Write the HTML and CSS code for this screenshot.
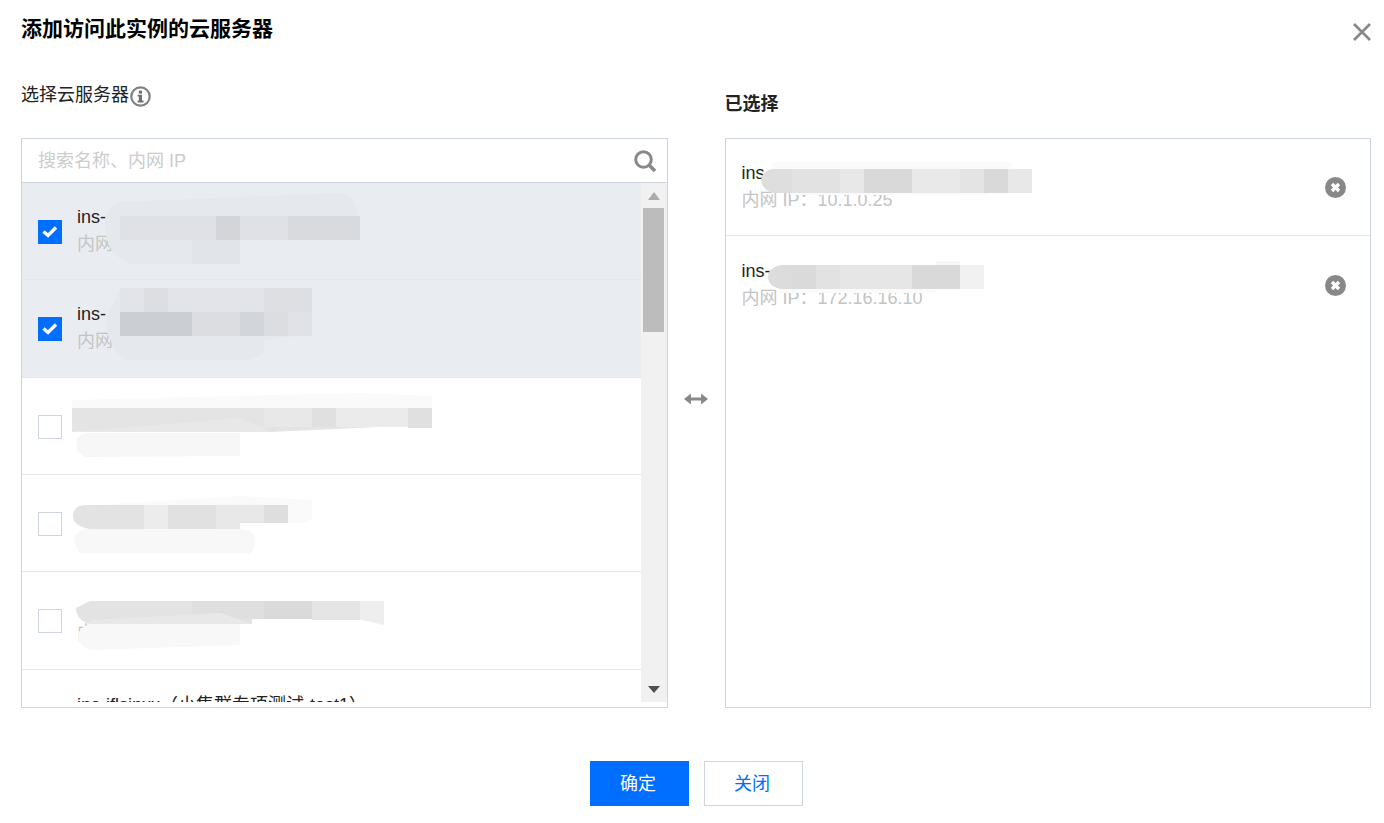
FILE: index.html
```html
<!DOCTYPE html>
<html lang="zh-CN">
<head>
    <meta charset="UTF-8">
    <title>添加访问此实例的云服务器</title>
    <link rel="stylesheet" href="styles.css">
</head>
<body>
    <div class="dialog">
        <div class="dialog-head">
            <h3 class="dialog-title">添加访问此实例的云服务器</h3>
            <svg class="close-icon" width="20" height="20" viewBox="0 0 20 20"><path d="M2 2l16 16M18 2L2 18" stroke="#888" stroke-width="2.6" fill="none"/></svg>
        </div>

        <div class="transfer">
            <div class="pane">
                <div class="pane-label">
                    选择云服务器<svg class="info-icon" width="21" height="21" viewBox="0 0 21 21"><circle cx="10.5" cy="10.5" r="9.200" fill="none" stroke="#808080" stroke-width="2.200"/><rect x="8.800" y="4.600" width="3.200" height="3" fill="#707070"/><path d="M7.600 8.800h4.400v5.800h1.500v1.800H7.600v-1.800h1.300v-4H7.600z" fill="#707070"/></svg>
                </div>
                <div class="box">
                    <div class="search">
                        <span class="search-text">搜索名称、内网 IP</span>
                        <svg class="search-icon" width="24" height="24" viewBox="0 0 24 24"><circle cx="10.5" cy="10.5" r="7.8" fill="none" stroke="#888" stroke-width="3"/><path d="M16 16l6 6" stroke="#888" stroke-width="3.6"/></svg>
                    </div>
                    <div class="list-wrap">
                        <ul class="list">
                            <li class="item selected">
                                <span class="check"><svg width="24" height="24" viewBox="0 0 24 24"><path d="M5.500 11.500l4.500 4L18 7.500" stroke="#fff" stroke-width="3.400" fill="none"/></svg></span>
                                <div class="item-text"><div class="item-name">ins-</div><div class="item-ip">内网</div></div>
                            </li>
                            <li class="item selected">
                                <span class="check"><svg width="24" height="24" viewBox="0 0 24 24"><path d="M5.500 11.500l4.500 4L18 7.500" stroke="#fff" stroke-width="3.400" fill="none"/></svg></span>
                                <div class="item-text"><div class="item-name">ins-</div><div class="item-ip">内网</div></div>
                            </li>
                            <li class="item">
                                <span class="check"></span>
                            </li>
                            <li class="item">
                                <span class="check"></span>
                            </li>
                            <li class="item">
                                <span class="check"></span>
                                <div class="item-text"><div class="item-name">&nbsp;</div><div class="item-ip">内</div></div>
                            </li>
                            <li class="item item-cut">
                                <span class="check"></span>
                                <div class="item-text"><div class="item-name">ins-iflsjnxx（小集群专项测试-test1）</div></div>
                            </li>
                        </ul>
                        <div class="scrollbar">
                            <span class="arrow-up"></span>
                            <div class="thumb"></div>
                            <span class="arrow-down"></span>
                        </div>
                    </div>
                </div>
            </div>

            <div class="swap">
                <svg width="24" height="12" viewBox="0 0 24 12"><path d="M0 6l7-5.500v4h10v-4l7 5.500-7 5.500v-4H7v4z" fill="#888"/></svg>
            </div>

            <div class="pane">
                <div class="pane-label pane-label-bold">已选择</div>
                <div class="box">
                    <ul class="picked">
                        <li class="picked-item">
                            <div class="item-text"><div class="item-name">ins-</div><div class="item-ip">内网 IP：10.1.0.25</div></div>
                            <svg class="remove-icon" width="21" height="21" viewBox="0 0 21 21"><circle cx="10.500" cy="10.500" r="10.500" fill="#888"/><path d="M7 7l7 7M14 7l-7 7" stroke="#fff" stroke-width="3.400"/></svg>
                        </li>
                        <li class="picked-item">
                            <div class="item-text"><div class="item-name">ins-</div><div class="item-ip">内网 IP：172.16.16.10</div></div>
                            <svg class="remove-icon" width="21" height="21" viewBox="0 0 21 21"><circle cx="10.500" cy="10.500" r="10.500" fill="#888"/><path d="M7 7l7 7M14 7l-7 7" stroke="#fff" stroke-width="3.400"/></svg>
                        </li>
                    </ul>
                </div>
            </div>
        </div>

        <div class="dialog-foot">
            <button class="btn btn-primary">确定</button>
            <button class="btn">关闭</button>
        </div>
    </div>

    <!-- mosaic that hides instance names, in page coordinates -->
    <svg class="mosaic" width="1384" height="823" viewBox="0 0 1384 823">
        <!-- row 1 -->
        <path d="M118 202L340 193q16 2 18 23v24H240v24H130q-25-10-25-40q0-16 13-22z" fill="#e5e8ed"/>
        <rect x="120" y="216" width="240" height="24" fill="#dfe1e6"/>
        <rect x="216" y="216" width="24" height="24" fill="#d3d5d9"/>
        <rect x="288" y="216" width="72" height="24" fill="#d8dade"/>
        <rect x="192" y="240" width="48" height="24" fill="#e1e4e8"/>
        <!-- row 2 -->
        <path d="M120 290H312V336H296L264 340V350Q260 360 240 360H125Q110 350 105 320z" fill="#e5e8ed"/>
        <rect x="120" y="288" width="192" height="24" fill="#e2e4e9"/>
        <rect x="144" y="288" width="24" height="24" fill="#dcdee2"/>
        <rect x="264" y="288" width="48" height="24" fill="#dddfe3"/>
        <rect x="120" y="312" width="192" height="24" fill="#dbdde1"/>
        <rect x="120" y="312" width="72" height="24" fill="#cbced3"/>
        <rect x="240" y="312" width="24" height="24" fill="#d2d5d9"/>
        <rect x="288" y="312" width="24" height="24" fill="#e0e2e7"/>
        <!-- row 3 -->
        <path d="M72 400L360 393L432 396V408H72z" fill="#fafafa"/>
        <path d="M72 408H432V428L400 426L270 432L240 420L72 432z" fill="#e4e4e4"/>
        <rect x="264" y="408" width="48" height="19" fill="#e8e8e8"/>
        <rect x="312" y="408" width="24" height="19" fill="#e0e0e0"/>
        <rect x="336" y="408" width="72" height="19" fill="#ebebeb"/>
        <rect x="408" y="408" width="24" height="20" fill="#e0e0e0"/>
        <path d="M72 432L240 418L272 432H72z" fill="#e8e8e8"/>
        <path d="M85 433H240V456L85 457Q76 452 76 445Q76 436 85 433z" fill="#f7f7f7"/>
        <!-- row 4 -->
        <path d="M80 506L240 496L312 500V515Q312 523 300 523H90Q73 522 73 515Q72 508 80 506z" fill="#fafafa"/>
        <path d="M85 505H288V523H240V529H90Q73 526 73 516Q73 506 85 505z" fill="#e3e3e3"/>
        <rect x="144" y="505" width="24" height="24" fill="#ececec"/>
        <rect x="168" y="505" width="48" height="24" fill="#e1e1e1"/>
        <rect x="216" y="505" width="24" height="24" fill="#e8e8e8"/>
        <rect x="240" y="505" width="24" height="18" fill="#e8e8e8"/>
        <rect x="264" y="505" width="24" height="18" fill="#dedede"/>
        <path d="M85 529H240Q255 530 255 541Q255 550 250 553H80Q74 545 74 540Q74 531 85 529z" fill="#f8f8f8"/>
        <!-- row 5 -->
        <path d="M90 601H360V619H340L252 613V624H90Q76 620 76 608z" fill="#e3e3e3"/>
        <rect x="192" y="601" width="120" height="18" fill="#dfdfdf"/>
        <rect x="264" y="601" width="48" height="18" fill="#dadada"/>
        <path d="M360 601H384V625L362 620H360z" fill="#eeeeee"/>
        <path d="M312 601H360V620H312z" fill="#e5e5e5"/>
        <path d="M90 620L220 613L252 624H90z" fill="#e8e8e8"/>
        <path d="M90 624H240V645L90 650Q78 645 78 636Q79 627 90 624z" fill="#f8f8f8"/>
        <!-- right row 1 -->
        <rect x="772" y="162" width="240" height="8" fill="#fbfbfb"/>
        <path d="M772 169H792V193H772Q761 188 761 180Q761 172 772 169z" fill="#dedede"/>
        <rect x="792" y="169" width="48" height="24" fill="#e2e2e2"/>
        <rect x="840" y="169" width="24" height="24" fill="#e8e8e8"/>
        <rect x="864" y="169" width="48" height="24" fill="#d9d9d9"/>
        <rect x="912" y="169" width="48" height="24" fill="#e9e9e9"/>
        <rect x="960" y="169" width="24" height="24" fill="#e4e4e4"/>
        <rect x="984" y="169" width="24" height="24" fill="#d9d9d9"/>
        <rect x="1008" y="169" width="24" height="24" fill="#e8e8e8"/>
        <rect x="790" y="193" width="200" height="2" fill="#fafafa"/>
        <!-- right row 2 -->
        <rect x="936" y="261" width="24" height="4" fill="#f6f6f6"/>
        <path d="M780 265H792V289H780Q768 286 768 277Q768 268 780 265z" fill="#dcdcdc"/>
        <rect x="792" y="265" width="24" height="24" fill="#dadada"/>
        <rect x="816" y="265" width="24" height="24" fill="#e2e2e2"/>
        <rect x="840" y="265" width="72" height="24" fill="#e6e6e6"/>
        <rect x="912" y="265" width="48" height="24" fill="#d9d9d9"/>
        <rect x="960" y="265" width="24" height="24" fill="#f1f1f1"/>
        <rect x="780" y="289" width="156" height="4" fill="#fafafa"/>
    </svg>
</body>
</html>
```

FILE: styles.css
```css
* {
    box-sizing: border-box;
}
body {
    margin: 0;
    background-color: #fff;
    color: #222;
    font-family: "Liberation Sans", "Noto Sans CJK SC", sans-serif;
    font-size: 18px;
}
ul {
    list-style: none;
    margin: 0;
    padding: 0;
}
.dialog {
    width: 1384px;
    padding: 0 13px 0 21px;
}
.dialog-head {
    display: flex;
    justify-content: space-between;
    align-items: center;
    height: 58px;
}
.dialog-title {
    margin: 0 0 4px 0;
    font-size: 21px;
    font-weight: bold;
    color: #000;
}
.close-icon {
    margin: 5px -1px 0 0;
}
.transfer {
    display: flex;
}
.pane {
    width: 646px;
}
.pane:first-child {
    width: 647px;
}
.pane-label {
    display: flex;
    align-items: center;
    height: 80px;
    padding: 25px 0 31px;
    line-height: 26px;
}
.pane-label-bold {
    padding: 34px 0 22px;
    margin-left: -1px;
    font-weight: bold;
}
.info-icon {
    margin: 3px 0 0 1px;
}
.box {
    display: flex;
    flex-direction: column;
    height: 570px;
    border: 1px solid #cfd5de;
}
.search {
    display: flex;
    justify-content: space-between;
    align-items: center;
    flex: none;
    height: 44px;
    padding: 0 10px 0 16px;
    border-bottom: 1px solid #cfd5de;
}
.search-text {
    margin-bottom: 4px;
    color: #ccc;
}
.search-icon {
    margin-top: 1px;
}
.list-wrap {
    display: flex;
    flex: 1;
    min-height: 0;
    margin-bottom: 5px;
}
.list {
    flex: 1;
    overflow: hidden;
}
.item {
    display: flex;
    align-items: center;
    height: 97.33px;
    padding-left: 16px;
    border-bottom: 1px solid #e3e6eb;
}
.item-cut {
    align-items: flex-start;
    padding-top: 22px;
}
.item-cut .check {
    margin-top: 23px;
}
.item.selected {
    background-color: #e9edf2;
}
.check {
    flex: none;
    width: 24px;
    height: 24px;
    margin: 2px 15px 0 0;
    border: 1px solid #cfd5de;
    background-color: #fff;
}
.selected .check {
    border: none;
    background-color: #006eff;
}
.check svg {
    display: block;
}
.item-text {
    margin-bottom: 1px;
    line-height: 27px;
}
.item-name {
    white-space: nowrap;
}
.item-ip {
    color: #c4c4c4;
}
.scrollbar {
    display: flex;
    flex-direction: column;
    align-items: center;
    flex: none;
    width: 26px;
    background-color: #f1f1f1;
}
.arrow-up, .arrow-down {
    flex: none;
    width: 0;
    height: 0;
    border-left: 6px solid transparent;
    border-right: 6px solid transparent;
}
.arrow-up {
    margin: 9px 0 8px;
    border-bottom: 8px solid #aaa;
}
.arrow-down {
    margin: auto 0 9px;
    border-top: 7px solid #505050;
}
.thumb {
    align-self: flex-start;
    width: 21px;
    height: 124px;
    margin-left: 2px;
    background-color: #bcbcbc;
}
.swap {
    display: flex;
    justify-content: center;
    align-items: center;
    width: 58px;
    padding-top: 32px;
}
.picked-item {
    display: flex;
    justify-content: space-between;
    align-items: center;
    height: 97.33px;
    padding: 0 24px 0 15px;
    border-bottom: 1px solid #e3e6eb;
}
.picked-item:last-child {
    border-bottom: none;
}
.picked-item .item-text {
    margin: 0;
}
.remove-icon {
    margin-top: 1px;
}
.dialog-foot {
    display: flex;
    justify-content: center;
    gap: 15px;
    padding: 53px 0 0 0;
}
.btn {
    width: 99px;
    height: 45px;
    padding: 0 2px 4px 0;
    border: 1px solid #cfd5de;
    background-color: #fff;
    color: #006eff;
    font-family: inherit;
    font-size: 18px;
}
.btn-primary {
    border-color: #006eff;
    background-color: #006eff;
    color: #fff;
}
.mosaic {
    position: absolute;
    top: 0;
    left: 0;
    pointer-events: none;
}
```
